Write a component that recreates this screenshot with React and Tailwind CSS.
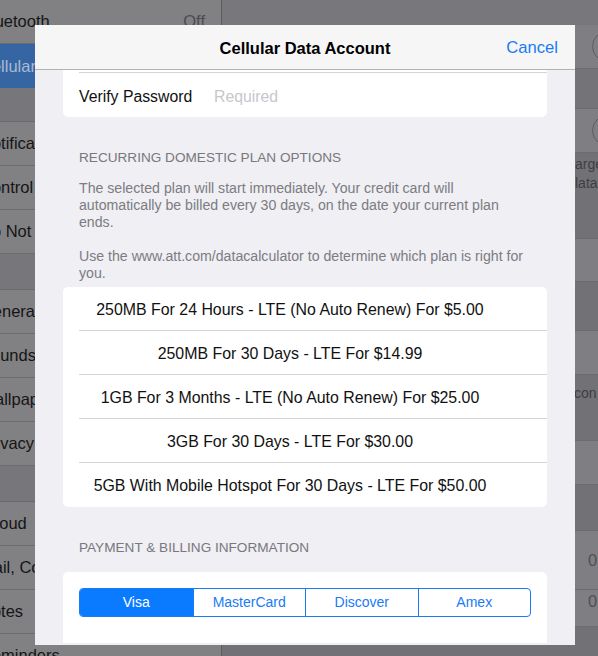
import React from "react";

const side = [
  { t: "Bluetooth", right: "Off", full: true },
  { t: "Cellular Data", sel: true },
  { gap: 34 },
  { t: "Notification Center" },
  { t: "Control Center" },
  { t: "Do Not Disturb" },
  { gap: 36 },
  { t: "General" },
  { t: "Sounds" },
  { t: "Wallpapers & Brightness" },
  { t: "Privacy" },
  { gap: 36 },
  { t: "iCloud" },
  { t: "Mail, Contacts, Calendars" },
  { t: "Notes" },
  { t: "Reminders", full: true },
];

const plans = [
  "250MB For 24 Hours - LTE (No Auto Renew) For $5.00",
  "250MB For 30 Days - LTE For $14.99",
  "1GB For 3 Months - LTE (No Auto Renew) For $25.00",
  "3GB For 30 Days - LTE For $30.00",
  "5GB With Mobile Hotspot For 30 Days - LTE For $50.00",
];

function Sidebar() {
  return (
    <div className="w-[222px] shrink-0 border-r border-[#5c5c60] bg-[#77777b] flex flex-col overflow-hidden">
      {side.map((r, i) => {
        if (r.gap === 34)
          return <div key={i} className="h-[34px] shrink-0 border-b border-[#6a6a6e]" />;
        if (r.gap)
          return <div key={i} className="h-[36px] shrink-0 border-b border-[#6a6a6e]" />;
        return (
          <div
            key={i}
            className={
              r.sel
                ? "h-[44px] shrink-0 flex items-center bg-[#3566a3] text-[#a9bad2]"
                : "h-[44px] shrink-0 flex items-center border-b border-[#6c6c70] bg-[#818184] text-[#151515]"
            }
          >
            <span
              className={
                r.full
                  ? "-ml-[20px] text-[16.5px] whitespace-nowrap flex-1"
                  : "-ml-[20px] w-[58px] overflow-hidden text-[16.5px] whitespace-nowrap"
              }
            >
              {r.t}
            </span>
            {r.right && <span className="pr-[16px] text-[16.5px] text-[#4c4c50]">{r.right}</span>}
          </div>
        );
      })}
    </div>
  );
}

function Detail() {
  return (
    <div className="flex-1 flex flex-col bg-[#727276] overflow-hidden">
      <div className="h-[25px] shrink-0 bg-[#78787c]" />
      <div className="h-[44px] shrink-0 bg-[#7f7f83] border-b border-[#6c6c70] flex items-center pl-[370px]">
        <div className="w-[51px] h-[31px] shrink-0 rounded-full border-[1.5px] border-[#5e5e62]" />
      </div>
      <div className="h-[40px] shrink-0 bg-[#747478] border-b border-[#6c6c70]" />
      <div className="h-[44px] shrink-0 bg-[#7f7f83] border-b border-[#6c6c70] flex items-center pl-[370px]">
        <div className="w-[51px] h-[31px] shrink-0 rounded-full border-[1.5px] border-[#5e5e62]" />
      </div>
      <div className="h-[85px] shrink-0 bg-[#727276] pt-[2px] pl-[353px] text-[14px] leading-[19px] text-[#3e3e42] whitespace-nowrap">
        <div>arges</div>
        <div>lata</div>
      </div>
      <div className="h-[44px] shrink-0 bg-[#7f7f83] border-y border-[#6c6c70]" />
      <div className="h-[48px] shrink-0 bg-[#727276]" />
      <div className="h-[45px] shrink-0 bg-[#7f7f83] border-y border-[#6c6c70]" />
      <div className="h-[65px] shrink-0 bg-[#727276] pt-[9px] pl-[352px] text-[14px] leading-[19px] text-[#3e3e42] whitespace-nowrap">
        con
      </div>
      <div className="h-[45px] shrink-0 bg-[#7f7f83] border-y border-[#6c6c70]" />
      <div className="h-[45px] shrink-0 bg-[#727276]" />
      <div className="h-[60px] shrink-0 bg-[#7f7f83] border-y border-[#6c6c70] flex items-center pl-[366px] text-[16.5px] text-[#505054]">
        0
      </div>
      <div className="h-[37px] shrink-0 bg-[#7f7f83] border-b border-[#6c6c70] pt-[1px] pl-[366px] text-[16.5px] leading-[20px] text-[#505054]">
        0
      </div>
      <div className="flex-1 bg-[#727276]" />
    </div>
  );
}

function Modal() {
  return (
    <div className="absolute left-[35px] top-[25px] w-[540px] h-[620px] bg-[#efeff4] overflow-hidden flex flex-col">
      <div className="h-[45px] shrink-0 border-b border-[#b2b2b2] bg-[#f6f6f7] grid grid-cols-[1fr_auto_1fr] items-center pt-[2px]">
        <div />
        <div className="text-[16.5px] font-bold text-black">Cellular Data Account</div>
        <div className="justify-self-end pr-[17px] text-[16.6px] text-[#1a7bf5]">Cancel</div>
      </div>

      <div className="flex flex-col">
        <div className="mx-[28px] bg-white rounded-b-[5px] pt-[2px]">
          <div className="ml-[16px] h-px bg-[#d4d4d8]" />
          <div className="h-[44px] flex items-center pl-[16px] pt-[3px] text-[15.8px]">
            <span className="w-[135px] text-[#111]">Verify Password</span>
            <span className="text-[#c7c7cd]">Required</span>
          </div>
        </div>

        <div className="mt-[32px] px-[44px] text-[13.6px] leading-[17px] text-[#78787d] uppercase whitespace-nowrap">
          Recurring Domestic Plan Options
        </div>
        <div className="mt-[14px] px-[44px] text-[14.15px] leading-[17px] text-[#7c7c81] whitespace-nowrap">
          The selected plan will start immediately. Your credit card will
          <br />
          automatically be billed every 30 days, on the date your current plan
          <br />
          ends.
        </div>
        <div className="mt-[17px] px-[44px] text-[14.15px] leading-[17px] text-[#7c7c81] whitespace-nowrap">
          Use the www.att.com/datacalculator to determine which plan is right for
          <br />
          you.
        </div>

        <div className="mt-[5px] mx-[28px] bg-white rounded-[5px] overflow-hidden">
          {plans.map((p, i) => (
            <div
              key={i}
              className={
                i < plans.length - 1
                  ? "ml-[16px] h-[44px] border-b border-[#d4d4d8] flex items-center justify-center pr-[46px] pt-[2px] text-[15.9px] text-[#111] whitespace-nowrap"
                  : "ml-[16px] h-[44px] flex items-center justify-center pr-[46px] pt-[2px] text-[15.9px] text-[#111] whitespace-nowrap"
              }
            >
              {p}
            </div>
          ))}
        </div>

        <div className="mt-[32px] px-[44px] text-[13.6px] leading-[17px] text-[#78787d] uppercase whitespace-nowrap">
          Payment &amp; Billing Information
        </div>

        <div className="mt-[16px] mx-[28px] h-[71px] bg-white rounded-t-[5px] pt-[16px] px-[16px]">
          <div className="grid grid-cols-4 h-[29px] border border-[#1a7bf5] rounded-[4px] overflow-hidden text-[14px]">
            <div className="bg-[#0a7aff] text-white flex items-center justify-center">Visa</div>
            <div className="border-l border-[#1a7bf5] text-[#1a7bf5] flex items-center justify-center">MasterCard</div>
            <div className="border-l border-[#1a7bf5] text-[#1a7bf5] flex items-center justify-center">Discover</div>
            <div className="border-l border-[#1a7bf5] text-[#1a7bf5] flex items-center justify-center">Amex</div>
          </div>
        </div>
      </div>
    </div>
  );
}

export default function App() {
  return (
    <div className="relative w-[598px] h-[656px] overflow-hidden font-['Liberation_Sans',Arial,sans-serif] bg-[#77777b]">
      <div className="flex h-full">
        <Sidebar />
        <Detail />
      </div>
      <Modal />
    </div>
  );
}
